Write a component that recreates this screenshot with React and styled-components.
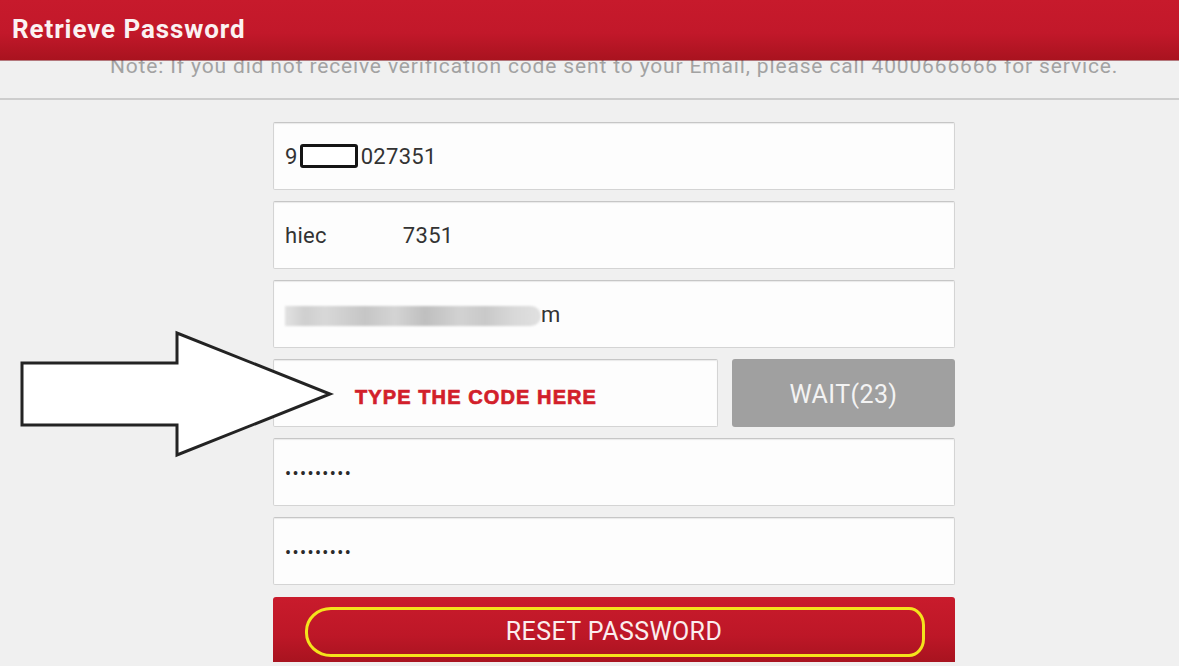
import React from "react";
import styled, { createGlobalStyle } from "styled-components";

const Global = createGlobalStyle`
  html, body { margin: 0; padding: 0; background: #f0f0f0; }
  body { font-family: Roboto, "Liberation Sans", sans-serif; width: 1179px; height: 666px; overflow: hidden; }
`;

const Page = styled.div`
  position: relative;
  width: 1179px;
  height: 666px;
  background: #f0f0f0;
  display: flex;
  flex-direction: column;
`;

const Header = styled.header`
  position: relative;
  z-index: 2;
  height: 60px;
  flex: none;
  display: flex;
  align-items: center;
  padding-left: 12px;
  background: linear-gradient(#c71a2c 0%, #c2182a 55%, #a9131f 100%);
  box-shadow: 0 1px 0 rgba(120, 0, 10, 0.5);
`;

const Title = styled.h1`
  margin: 0 0 2px;
  color: #fbf2f2;
  font-size: 26px;
  font-weight: 700;
  letter-spacing: 0.9px;
`;

const NoteBar = styled.div`
  height: 38px;
  flex: none;
  border-bottom: 2px solid #cdcdcd;
  padding-left: 49px;
  display: flex;
  justify-content: center;
`;

const Note = styled.p`
  margin: -6px 0 0;
  color: #a2a2a2;
  font-size: 21px;
  line-height: 24px;
  letter-spacing: 0.85px;
  white-space: nowrap;
`;

const Form = styled.main`
  padding: 22px 0 0 273px;
  display: flex;
  flex-direction: column;
  gap: 11px;
`;

const Row = styled.div`
  display: flex;
  gap: 14px;
  width: 682px;
`;

const Field = styled.div`
  box-sizing: border-box;
  flex: ${(p) => (p.$grow ? 1 : "none")};
  width: ${(p) => (p.$w ? `${p.$w}px` : "682px")};
  height: 68px;
  background: #fdfdfd;
  border: 1px solid #d4d4d4;
  border-top-color: #c6c6c6;
  border-radius: 2px;
  box-shadow: inset 0 1px 1px rgba(0, 0, 0, 0.08);
  display: flex;
  align-items: center;
  padding-left: 11px;
  color: #333;
  font-size: 22px;
  letter-spacing: 0.3px;
`;

const Redact = styled.span`
  display: inline-block;
  box-sizing: border-box;
  width: 58px;
  height: 24px;
  margin: 0 3px 0 2px;
  border: 3px solid #151515;
  border-radius: 3px;
  background: #fff;
`;

const Gap = styled.span`
  display: inline-block;
  width: ${(p) => p.$w}px;
`;

const Blur = styled.span`
  display: inline-block;
  width: 256px;
  height: 20px;
  margin-top: 4px;
  border-radius: 0 10px 10px 0;
  background: linear-gradient(
    90deg,
    #e2e2e2 0px,
    #cfcfcf 20px,
    #d8d8d8 40px,
    #c6c6c6 80px,
    #d4d4d4 110px,
    #bfbfbf 140px,
    #d2d2d2 175px,
    #c9c9c9 200px,
    #d9d9d9 230px,
    #e0e0e0 256px
  );
  filter: blur(1.2px);
`;

const Hint = styled.span`
  margin-left: 70px;
  margin-top: 8px;
  color: #d21f2b;
  font-family: "Liberation Sans", Arial, sans-serif;
  font-weight: 900;
  font-size: 20px;
  letter-spacing: 1.1px;
  -webkit-text-stroke: 0.7px #d21f2b;
`;

const Dots = styled.span`
  font-size: 18px;
  letter-spacing: 1.4px;
  color: #2a2a2a;
  margin-top: 2px;
`;

const WaitButton = styled.button`
  flex: none;
  width: 223px;
  height: 68px;
  border: none;
  border-radius: 3px;
  background: #a0a0a0;
  color: #f3f3f3;
  font-family: Roboto, sans-serif;
  font-size: 25px;
  letter-spacing: 0.4px;
  padding: 2px 0 0;
`;

const ResetButton = styled.button`
  position: relative;
  margin-top: 1px;
  width: 682px;
  height: 65px;
  border: none;
  border-radius: 3px 3px 0 0;
  background: linear-gradient(#c91b2c 0%, #bd1727 60%, #a8131f 100%);
  color: #fbeeee;
  font-family: Roboto, sans-serif;
  font-size: 25px;
  letter-spacing: 0.4px;
  padding: 4px 0 0;
`;

const Highlight = styled.span`
  position: absolute;
  left: 32px;
  top: 10px;
  width: 620px;
  height: 50px;
  box-sizing: border-box;
  border: 3px solid #f4e31c;
  border-radius: 26px 16px 16px 26px / 24px 18px 18px 24px;
`;

const Arrow = styled.svg`
  position: absolute;
  left: 0;
  top: 0;
  z-index: 3;
  pointer-events: none;
`;

export default function App() {
  return (
    <Page>
      <Global />
      <Header>
        <Title>Retrieve Password</Title>
      </Header>
      <NoteBar>
        <Note>
          Note: If you did not receive verification code sent to your Email, please call 4000666666 for service.
        </Note>
      </NoteBar>
      <Form>
        <Field>
          9<Redact />027351
        </Field>
        <Field>
          hiec<Gap $w={76} />7351
        </Field>
        <Field>
          <Blur />m
        </Field>
        <Row>
          <Field $grow>
            <Hint>TYPE THE CODE HERE</Hint>
          </Field>
          <WaitButton>WAIT(23)</WaitButton>
        </Row>
        <Field>
          <Dots>•••••••••</Dots>
        </Field>
        <Field>
          <Dots>•••••••••</Dots>
        </Field>
        <ResetButton>
          <Highlight />
          RESET PASSWORD
        </ResetButton>
      </Form>
      <Arrow width="340" height="470" viewBox="0 0 340 470">
        <polygon
          points="22,363 177,363 177,333 330,394 177,455 177,425 22,425"
          fill="#ffffff"
          stroke="#232323"
          strokeWidth="3"
          strokeLinejoin="miter"
        />
      </Arrow>
    </Page>
  );
}
